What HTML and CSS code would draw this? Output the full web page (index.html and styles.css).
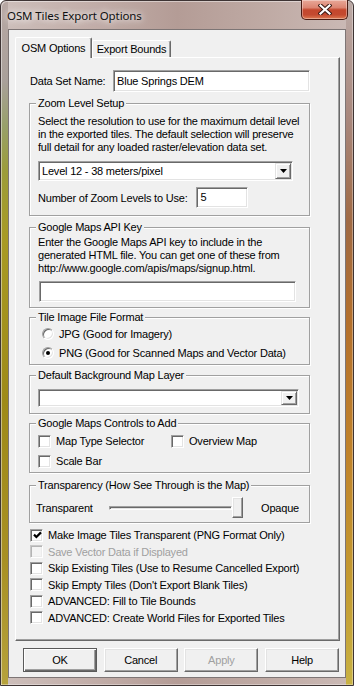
FILE: index.html
```html
<!DOCTYPE html>
<html>
<head>
<meta charset="utf-8">
<link rel="stylesheet" href="styles.css">
</head>
<body>
<div class="window">
  <div class="titlebar">
    <span class="title">OSM Tiles Export Options</span>
    <div class="close">
      <svg width="14" height="11" viewBox="0 0 14 11">
        <path d="M2.5 1.5 L11.5 9.5 M11.5 1.5 L2.5 9.5" stroke="#3b1a14" stroke-width="4.2" stroke-linecap="square" fill="none"/>
        <path d="M2.5 1.5 L11.5 9.5 M11.5 1.5 L2.5 9.5" stroke="#fff" stroke-width="2.2" stroke-linecap="square" fill="none"/>
      </svg>
    </div>
  </div>
  <div class="client">
    <div class="tabs">
      <div class="tab active">OSM Options</div>
      <div class="tab">Export Bounds</div>
    </div>
    <div class="panel">
      <div class="name-row">
        <span class="lbl">Data Set Name:</span>
        <div class="textbox name-box">Blue Springs DEM</div>
      </div>

      <div class="group g-zoom">
        <div class="group-title">Zoom Level Setup</div>
        <p class="desc">Select the resolution to use for the maximum detail level<br>in the exported tiles. The default selection will preserve<br>full detail for any loaded raster/elevation data set.</p>
        <div class="combo zoom-combo">
          <span class="combo-text">Level 12 - 38 meters/pixel</span>
          <div class="combo-btn"><svg width="7" height="4" viewBox="0 0 7 4"><path d="M0 0 H7 L3.5 4 Z" fill="#000"/></svg></div>
        </div>
        <div class="levels-row">
          <span>Number of Zoom Levels to Use:</span>
          <div class="textbox levels-box">5</div>
        </div>
      </div>

      <div class="group g-api">
        <div class="group-title">Google Maps API Key</div>
        <p class="desc">Enter the Google Maps API key to include in the<br>generated HTML file. You can get one of these from<br>http://www.google.com/apis/maps/signup.html.</p>
        <div class="textbox api-box"></div>
      </div>

      <div class="group g-format">
        <div class="group-title">Tile Image File Format</div>
        <div class="radio-row"><span class="radio"></span><span>JPG (Good for Imagery)</span></div>
        <div class="radio-row"><span class="radio on"></span><span>PNG (Good for Scanned Maps and Vector Data)</span></div>
      </div>

      <div class="group g-bg">
        <div class="group-title">Default Background Map Layer</div>
        <div class="combo bg-combo">
          <span class="combo-text"></span>
          <div class="combo-btn"><svg width="7" height="4" viewBox="0 0 7 4"><path d="M0 0 H7 L3.5 4 Z" fill="#000"/></svg></div>
        </div>
      </div>

      <div class="group g-controls">
        <div class="group-title">Google Maps Controls to Add</div>
        <div class="ctl-grid">
          <div class="check-row"><span class="check"></span><span>Map Type Selector</span></div>
          <div class="check-row"><span class="check"></span><span>Overview Map</span></div>
          <div class="check-row"><span class="check"></span><span>Scale Bar</span></div>
        </div>
      </div>

      <div class="group g-trans">
        <div class="group-title">Transparency (How See Through is the Map)</div>
        <div class="trans-row">
          <span class="t-left">Transparent</span>
          <div class="slider">
            <div class="track"></div>
            <div class="thumb"></div>
          </div>
          <span class="t-right">Opaque</span>
        </div>
      </div>

      <div class="checklist">
        <div class="check-row"><span class="check">
          <svg width="9" height="9" viewBox="0 0 9 9"><path d="M1 3.6 L3.4 6 L8 1.4" stroke="#000" stroke-width="2.2" fill="none"/></svg>
        </span><span>Make Image Tiles Transparent (PNG Format Only)</span></div>
        <div class="check-row disabled"><span class="check"></span><span>Save Vector Data if Displayed</span></div>
        <div class="check-row"><span class="check"></span><span>Skip Existing Tiles (Use to Resume Cancelled Export)</span></div>
        <div class="check-row"><span class="check"></span><span>Skip Empty Tiles (Don't Export Blank Tiles)</span></div>
        <div class="check-row"><span class="check"></span><span>ADVANCED: Fill to Tile Bounds</span></div>
        <div class="check-row"><span class="check"></span><span>ADVANCED: Create World Files for Exported Tiles</span></div>
      </div>
    </div>

    <div class="buttons">
      <div class="btn default">OK</div>
      <div class="btn">Cancel</div>
      <div class="btn disabled">Apply</div>
      <div class="btn">Help</div>
    </div>
  </div>
</div>
</body>
</html>
```

FILE: styles.css
```css
* { box-sizing: border-box; }
html, body { margin: 0; padding: 0; }
body {
  width: 354px;
  height: 686px;
  overflow: hidden;
  background: #fff;
  font-family: "Liberation Sans", Arial, sans-serif;
  font-size: 11px;
  letter-spacing: -0.2px;
  color: #000;
}

.window {
  width: 354px;
  height: 686px;
  border: 1px solid #3e3434;
  border-radius: 6px 6px 0 0;
  padding: 0 7px 7px;
  display: flex;
  flex-direction: column;
  background:
    linear-gradient(to bottom, #b8a8a4 0px, #a9a09a 80px, #98a06a 125px, #9c9c3a 170px, #a89a24 240px, #9e8a18 400px, #a89024 560px, #b6a23c 686px) left top / 7px 100% no-repeat,
    linear-gradient(to bottom, #bcaaa6 0px, #a8877c 120px, #a06a44 220px, #b4702c 320px, #c0822a 450px, #c49a30 580px, #c8b244 686px) right top / 7px 100% no-repeat,
    linear-gradient(to right, #cdbfbb 0%, #c2aea9 25%, #b49c96 50%, #bfaaa4 75%, #cbbab6 100%);
  box-shadow: inset 1px 1px 0 rgba(255,255,255,0.45), inset -1px -1px 0 rgba(255,255,255,0.35);
}

.titlebar {
  height: 28px;
  margin: 0 -7px;
  padding: 0 5px 0 6px;
  display: flex;
  align-items: flex-start;
  flex: none;
}
.title {
  font-family: "Segoe UI", "Noto Sans", sans-serif;
  font-size: 11.5px;
  letter-spacing: -0.1px;
  line-height: 16px;
  margin-top: 7px;
  color: #101010;
  text-shadow: 0 0 6px #fff, 0 0 10px rgba(255,255,255,0.8);
}
.close {
  margin-left: auto;
  margin-top: -1px;
  width: 47px;
  height: 20px;
  border: 1px solid #4a1c14;
  border-top: none;
  border-radius: 0 0 5px 5px;
  background: linear-gradient(to bottom, #e9a898 0%, #dc8572 40%, #c4472d 52%, #c44a30 78%, #de7a52 100%);
  box-shadow: inset 0 0 0 1px rgba(255,255,255,0.35);
  display: flex;
  align-items: center;
  justify-content: center;
}

.client {
  flex: 1;
  border: 1px solid #7d7575;
  background: #f0f0f0;
  padding: 7px 5px 0 6px;
}

.tabs {
  display: flex;
  align-items: flex-end;
  height: 20px;
}
.tab {
  height: 17px;
  width: 79px;
  border: 1px solid;
  border-color: #fff #696969 transparent #fff;
  border-bottom: none;
  border-radius: 2px 2px 0 0;
  box-shadow: inset -1px 0 0 #a0a0a0;
  display: flex;
  align-items: center;
  justify-content: center;
  white-space: nowrap;
  background: #f0f0f0;
}
.tab.active {
  width: 77px;
  height: 21px;
  margin-bottom: -1px;
  padding-bottom: 1px;
  position: relative;
  z-index: 1;
}

.panel {
  height: 584px;
  border: 1px solid;
  border-color: #fff #696969 #696969 #fff;
  box-shadow: inset -1px -1px 0 #a0a0a0;
  padding: 12px 0 0 13px;
}

.name-row {
  width: 281px;
  height: 22px;
  display: flex;
  align-items: center;
}
.lbl { margin-left: 1px; }

.textbox {
  background: #fff;
  border: 1px solid;
  border-color: #a0a0a0 #fff #fff #a0a0a0;
  box-shadow: inset 1px 1px 0 #696969, inset -1px -1px 0 #e3e3e3;
  padding: 0 3px;
  display: flex;
  align-items: center;
  white-space: nowrap;
}
.name-box {
  margin-left: auto;
  width: 197px;
  height: 22px;
  padding-bottom: 1px;
}

.group {
  width: 281px;
  border: 1px solid #a0a0a0;
  box-shadow: inset 1px 1px 0 #fff, 1px 1px 0 #fff;
  padding: 0 8px;
}
.group-title {
  width: fit-content;
  height: 13px;
  line-height: 13px;
  margin: -7px 0 0 -2px;
  padding: 0 2px;
  background: #f0f0f0;
  white-space: nowrap;
}
.desc {
  margin: 0;
  line-height: 13px;
  white-space: nowrap;
}

.g-zoom { margin-top: 11px; padding-bottom: 7px; }
.g-zoom .desc { margin-top: 5px; }

.combo {
  background: #fff;
  border: 1px solid;
  border-color: #a0a0a0 #fff #fff #a0a0a0;
  box-shadow: inset 1px 1px 0 #696969, inset -1px -1px 0 #e3e3e3;
  padding: 1px 1px 1px 3px;
  display: flex;
  align-items: center;
}
.combo-text { flex: 1; white-space: nowrap; }
.combo-btn {
  width: 16px;
  align-self: stretch;
  background: #f0f0f0;
  border: 1px solid;
  border-color: #e3e3e3 #696969 #696969 #e3e3e3;
  box-shadow: inset 1px 1px 0 #fff, inset -1px -1px 0 #a0a0a0;
  display: flex;
  align-items: center;
  justify-content: center;
}
.zoom-combo { margin-top: 7px; width: 255px; height: 20px; }
.bg-combo { margin-top: 7px; width: 261px; height: 18px; }

.levels-row {
  margin-top: 6px;
  height: 21px;
  display: flex;
  align-items: center;
}
.levels-box {
  margin-left: 9px;
  width: 52px;
  height: 21px;
  padding-bottom: 1px;
}

.g-api { margin-top: 11px; padding-bottom: 5px; }
.g-api .desc { margin-top: 2px; }
.api-box { margin: 6px 0 0 1px; width: 257px; height: 21px; }

.g-format { margin-top: 9px; padding-bottom: 2px; }
.radio-row {
  height: 19px;
  display: flex;
  align-items: center;
  white-space: nowrap;
}
.radio {
  width: 12px;
  height: 12px;
  margin: 0 5px 0 4px;
  border-radius: 50%;
  border: 1px solid;
  border-color: #a0a0a0 #fff #fff #a0a0a0;
  box-shadow: inset 1px 1px 0 #696969, inset -1px -1px 0 #e3e3e3;
  background: #fff;
  display: flex;
  align-items: center;
  justify-content: center;
  flex: none;
}
.radio.on::after {
  content: "";
  width: 4px;
  height: 4px;
  border-radius: 50%;
  background: #000;
}

.g-bg { margin-top: 10px; padding-bottom: 6px; }

.g-controls { margin-top: 9px; padding-bottom: 1px; }
.ctl-grid {
  margin-top: 1px;
  display: grid;
  grid-template-columns: 133px auto;
  grid-auto-rows: 20px;
}

.check-row {
  display: flex;
  align-items: center;
  white-space: nowrap;
}
.check {
  width: 13px;
  height: 13px;
  margin-right: 5px;
  flex: none;
  background: #fff;
  border: 1px solid;
  border-color: #a0a0a0 #fff #fff #a0a0a0;
  box-shadow: inset 1px 1px 0 #696969, inset -1px -1px 0 #e3e3e3;
  display: flex;
  align-items: center;
  justify-content: center;
}
.check svg { margin: 1px 0 0 1px; }
.check-row.disabled { color: #a0a0a0; }
.check-row.disabled .check {
  background: #f4f4f4;
  border-color: #c8c8c8 #fff #fff #c8c8c8;
  box-shadow: inset 1px 1px 0 #b4b4b4, inset -1px -1px 0 #ececec;
}

.g-trans { margin-top: 12px; padding-bottom: 4px; }
.trans-row {
  margin-top: 5px;
  height: 21px;
  display: flex;
  align-items: center;
  white-space: nowrap;
}
.t-left { margin-left: -2px; width: 73px; }
.slider {
  display: flex;
  align-items: center;
  height: 21px;
}
.track {
  width: 123px;
  height: 4px;
  border: 1px solid;
  border-color: #a0a0a0 #fff #fff #a0a0a0;
  box-shadow: inset 1px 1px 0 #696969;
  background: #e3e3e3;
}
.thumb {
  width: 11px;
  height: 21px;
  background: #f0f0f0;
  border: 1px solid;
  border-color: #fff #696969 #696969 #fff;
  box-shadow: inset -1px -1px 0 #a0a0a0, inset 1px 1px 0 #e3e3e3;
}
.t-right { margin-left: auto; margin-right: 2px; }

.checklist { margin: 4px 0 0 1px; }
.checklist .check-row { height: 16.5px; }

.buttons {
  display: flex;
  gap: 6.7px;
  margin-top: 7px;
  padding-left: 8px;
}
.btn {
  width: 74px;
  height: 24px;
  background: #f0f0f0;
  border: 1px solid;
  border-color: #fff #696969 #696969 #fff;
  box-shadow: inset -1px -1px 0 #a0a0a0, inset 1px 1px 0 #e3e3e3;
  display: flex;
  align-items: center;
  justify-content: center;
  padding-bottom: 1px;
}
.btn.default {
  border-color: #5a5a5a;
  box-shadow: inset 1px 1px 0 #fff, inset -1px -1px 0 #696969, inset -2px -2px 0 #a0a0a0;
}
.btn.disabled { color: #a0a0a0; }
```
